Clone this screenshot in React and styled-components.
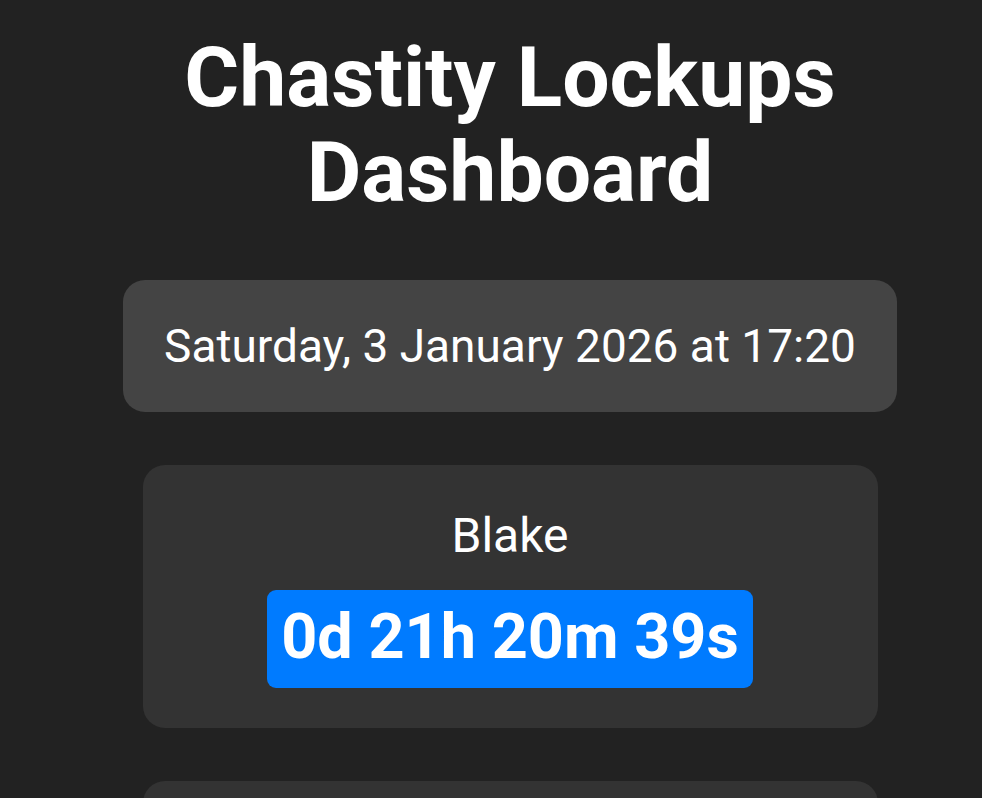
import React from 'react';
import styled, { createGlobalStyle } from 'styled-components';

const GlobalStyle = createGlobalStyle`
    html, body {
        margin: 0;
        padding: 0;
        background-color: #222222;
        color: #ffffff;
        font-family: Roboto, "Noto Sans", Arial, sans-serif;
    }
    html {
        overflow: hidden;
    }
`;

const Page = styled.main`
    display: flex;
    flex-direction: column;
    align-items: center;
    padding: 30px 0 40px 38px;
`;

const Title = styled.h1`
    width: 774px;
    margin: 0 0 60px;
    font-size: 84px;
    font-weight: 700;
    line-height: 95px;
    text-align: center;
`;

const DateBox = styled.div`
    width: 774px;
    box-sizing: border-box;
    padding: 39px 20px;
    margin-bottom: 53px;
    background-color: #444444;
    border-radius: 22px;
    font-size: 46px;
    line-height: 54px;
    text-align: center;
`;

const List = styled.div`
    display: flex;
    flex-direction: column;
    gap: 53px;
`;

const Card = styled.section`
    width: 735px;
    box-sizing: border-box;
    padding: 43px 40px 40px;
    background-color: #333333;
    border-radius: 22px;
    display: flex;
    flex-direction: column;
    align-items: center;
`;

const Name = styled.div`
    font-size: 48px;
    line-height: 56px;
    margin-bottom: 26px;
`;

const Timer = styled.div`
    padding: 10px 14px 14px;
    background-color: #007bff;
    border-radius: 9px;
    font-size: 63px;
    font-weight: 700;
    line-height: 74px;
`;

const lockups = [
    { name: 'Blake', elapsed: '0d 21h 20m 39s' },
    { name: 'Jordan', elapsed: '2d 4h 11m 02s' },
];

export default function App() {
    return (
        <>
            <GlobalStyle />
            <Page>
                <Title>Chastity Lockups Dashboard</Title>
                <DateBox>Saturday, 3 January 2026 at 17:20</DateBox>
                <List>
                    {lockups.map(l => (
                        <Card key={l.name}>
                            <Name>{l.name}</Name>
                            <Timer>{l.elapsed}</Timer>
                        </Card>
                    ))}
                </List>
            </Page>
        </>
    );
}
